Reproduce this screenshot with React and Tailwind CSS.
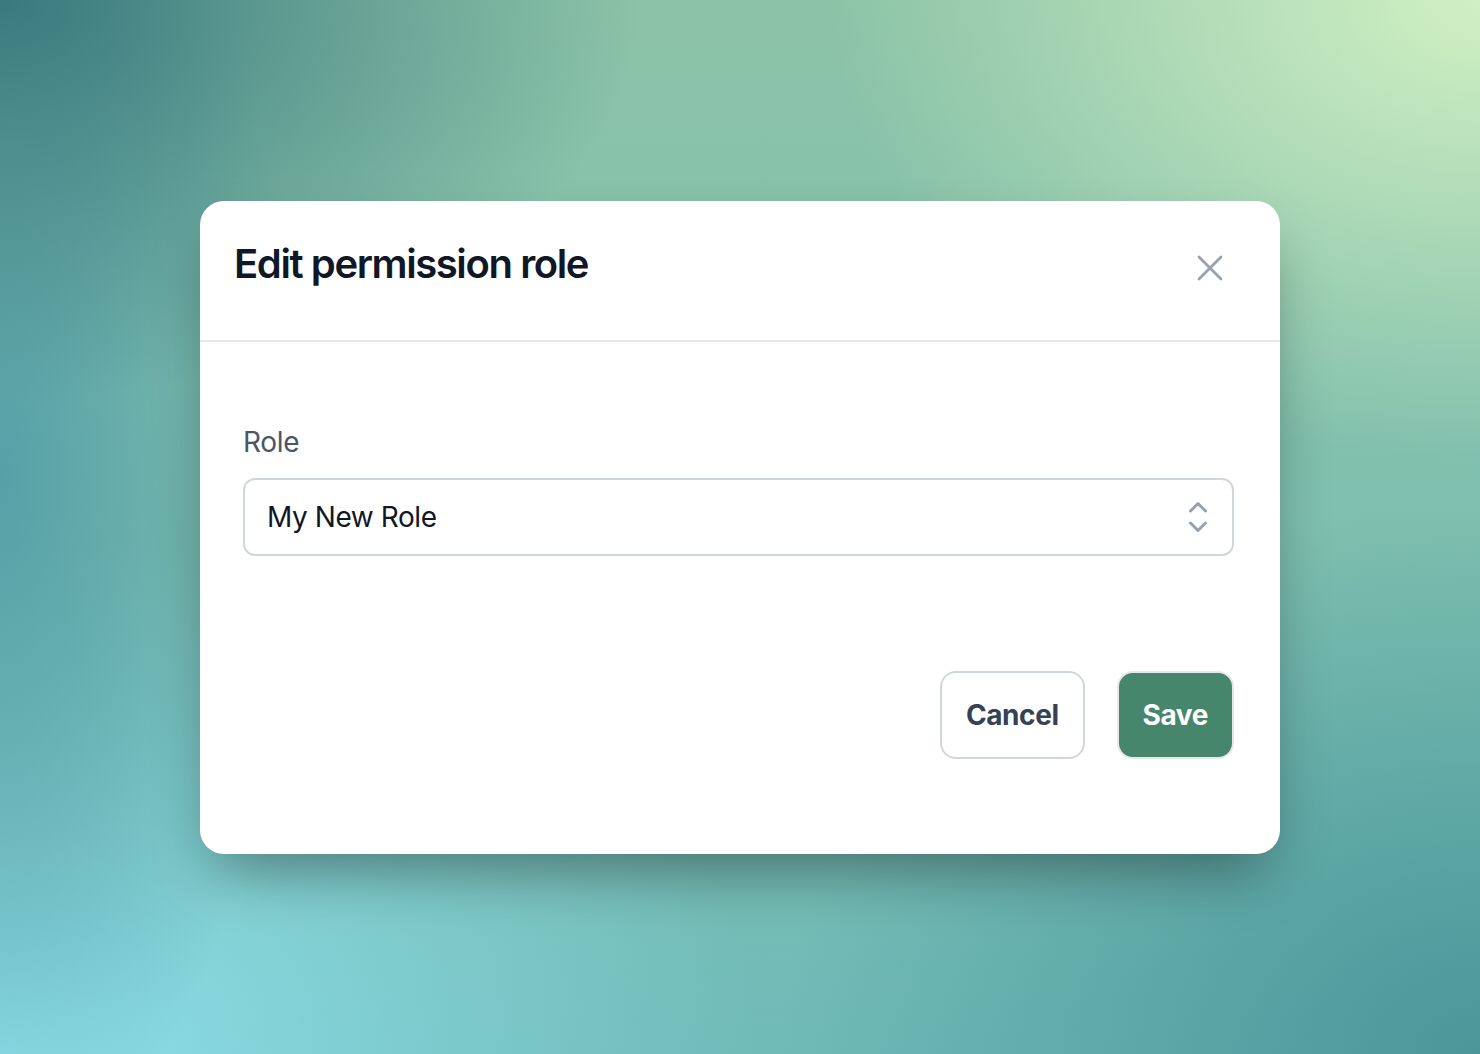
import { useState } from 'react';

// Heroicons-style outline X (stroke 1.5 on a 24 grid).
function XIcon({ className }) {
  return (
    <svg viewBox="0 0 24 24" fill="none" stroke="currentColor" strokeWidth={1.5} strokeLinecap="round" strokeLinejoin="round" className={className}>
      <path d="M6 18 18 6M6 6l12 12" />
    </svg>
  );
}

// Up/down chevrons shown at the right edge of the select.
function ChevronUpDown({ className }) {
  return (
    <svg viewBox="0 0 24 24" fill="none" stroke="currentColor" strokeWidth={1.5} strokeLinecap="round" strokeLinejoin="round" className={className}>
      <path d="M8.25 15 12 18.75 15.75 15m-7.5-6L12 5.25 15.75 9" />
    </svg>
  );
}

export default function App() {
  const [role, setRole] = useState('My New Role');

  return (
    <div
      className="flex h-screen w-full items-center justify-center bg-[radial-gradient(ellipse_650px_460px_at_100%_0%,#d0f0c3,transparent),radial-gradient(ellipse_640px_400px_at_0%_0%,#3a7a7e,transparent),radial-gradient(ellipse_300px_700px_at_0%_45%,#56a0a8,transparent),radial-gradient(ellipse_760px_520px_at_0%_100%,#8de0ea,transparent),radial-gradient(ellipse_700px_550px_at_100%_100%,#4a9699,transparent),linear-gradient(to_bottom,#8cc3a7,#7cbfb0_60%,#70bab8)]"
      style={{ fontFamily: 'Inter, "Noto Sans", sans-serif' }}
    >
      <div className="w-[1080px] overflow-hidden rounded-[24px] bg-white shadow-[0_30px_60px_-15px_rgba(0,0,0,0.4)]">
        {/* Header */}
        <div className="flex h-[141px] items-start justify-between border-b-2 border-gray-200 pl-[34px] pr-[48px] pt-[39px]">
          <h2 className="text-[40px] font-semibold leading-[48px] tracking-[-0.035em] text-gray-900">Edit permission role</h2>
          <button className="mt-[6px] text-gray-400">
            <XIcon className="h-[44px] w-[44px]" />
          </button>
        </div>

        {/* Body */}
        <div className="pb-[95px] pl-[43px] pr-[46px] pt-[80px]">
          <label className="block text-[28px] leading-[40px] tracking-[-0.01em] text-gray-600">Role</label>
          <div className="mt-[16px] flex h-[78px] items-center justify-between rounded-[12px] border-2 border-gray-300 pl-[22px] pr-[10px]">
            <span className="text-[28px] tracking-[-0.015em] text-gray-900" onClick={() => setRole(role)}>{role}</span>
            <ChevronUpDown className="h-[48px] w-[48px] text-gray-400" />
          </div>

          <div className="mt-[115px] flex justify-end gap-[32px]">
            <button className="h-[88px] rounded-[16px] border-2 border-gray-300 bg-white px-[24px] text-[28px] font-bold tracking-[-0.015em] text-gray-700">
              Cancel
            </button>
            <button className="h-[88px] rounded-[16px] border-2 border-gray-200 bg-[#46866c] px-[24px] text-[28px] font-bold tracking-[-0.015em] text-white">
              Save
            </button>
          </div>
        </div>
      </div>
    </div>
  );
}
